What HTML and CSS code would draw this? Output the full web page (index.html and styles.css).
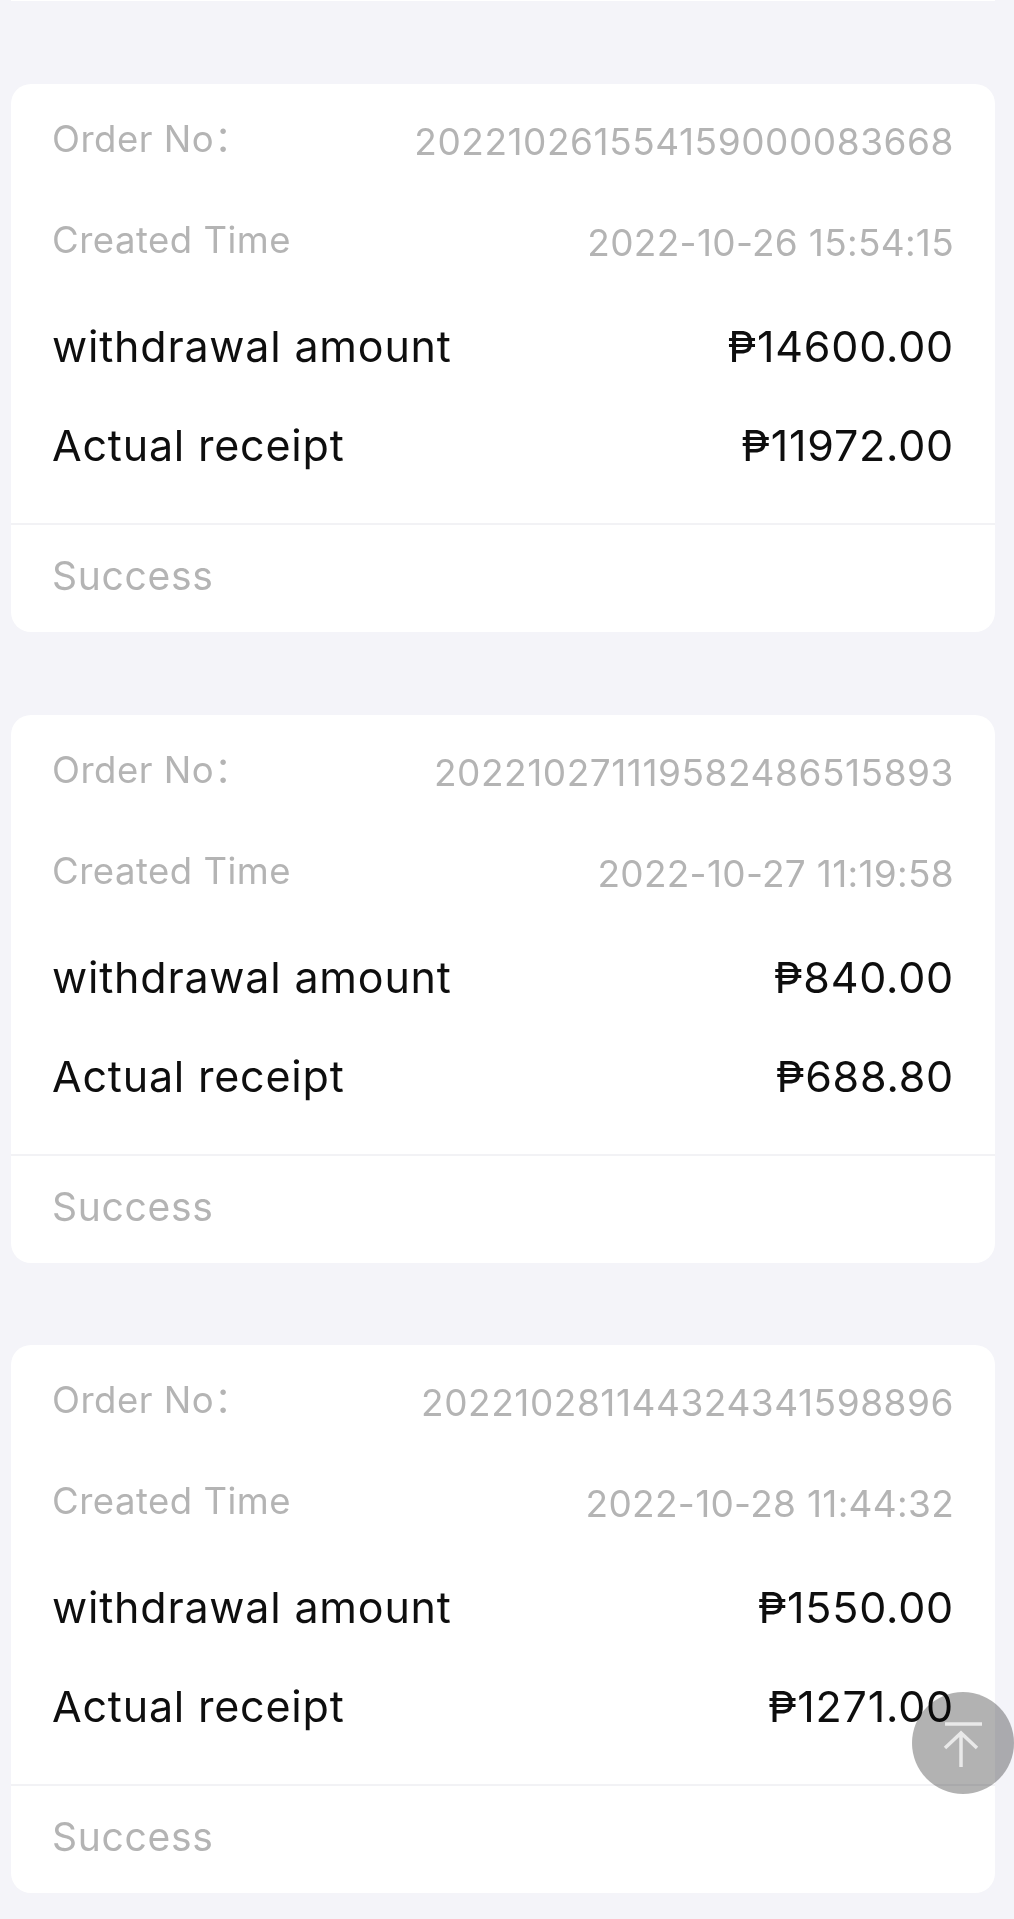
FILE: index.html
```html
<!DOCTYPE html>
<html lang="en">
<head>
<meta charset="utf-8">
<title>Withdrawal records</title>
<link rel="stylesheet" href="styles.css">
</head>
<body>
<main class="list">
  <div class="card-end"></div>
  <article class="card">
    <div class="info">
      <div class="row row-muted"><span class="label">Order No：</span><span class="value">202210261554159000083668</span></div>
      <div class="row row-muted"><span class="label">Created Time</span><span class="value date">2022-10-26 15:54:15</span></div>
      <div class="row row-strong"><span class="label">withdrawal amount</span><span class="value">₱14600.00</span></div>
      <div class="row row-strong"><span class="label">Actual receipt</span><span class="value">₱11972.00</span></div>
    </div>
    <div class="status">Success</div>
  </article>
  <article class="card">
    <div class="info">
      <div class="row row-muted"><span class="label">Order No：</span><span class="value">202210271119582486515893</span></div>
      <div class="row row-muted"><span class="label">Created Time</span><span class="value date">2022-10-27 11:19:58</span></div>
      <div class="row row-strong"><span class="label">withdrawal amount</span><span class="value">₱840.00</span></div>
      <div class="row row-strong"><span class="label">Actual receipt</span><span class="value">₱688.80</span></div>
    </div>
    <div class="status">Success</div>
  </article>
  <article class="card">
    <div class="info">
      <div class="row row-muted"><span class="label">Order No：</span><span class="value">202210281144324341598896</span></div>
      <div class="row row-muted"><span class="label">Created Time</span><span class="value date">2022-10-28 11:44:32</span></div>
      <div class="row row-strong"><span class="label">withdrawal amount</span><span class="value">₱1550.00</span></div>
      <div class="row row-strong"><span class="label">Actual receipt</span><span class="value">₱1271.00</span></div>
    </div>
    <div class="status">Success</div>
  </article>
</main>
<button class="to-top" type="button" aria-label="Back to top">
  <svg viewBox="0 0 102 102" width="102" height="102" fill="none" stroke="#e9e9e9" stroke-width="3.5">
    <path d="M33 32H70"/>
    <path d="M49 75V41M33 56L49 41L65 56"/>
  </svg>
</button>
</body>
</html>
```
FILE: styles.css
```css
* { box-sizing: border-box; }
html, body { margin: 0; padding: 0; }
body {
  position: relative;
  height: 1919px;
  overflow: hidden;
  background: #f4f4f9;
  font-family: Inter, "Noto Sans CJK SC", "Liberation Sans", sans-serif;
}
.list {
  display: flex;
  flex-direction: column;
  gap: 82.5px;
  padding: 0 19px 0 11px;
  filter: blur(0.4px);
}
.card-end {
  height: 1px;
  margin-bottom: 0.5px;
  background: #fff;
}
.card {
  height: 548px;
  display: flex;
  flex-direction: column;
  background: #fff;
  border-radius: 20px;
}
.info {
  height: 441px;
  padding: 28px 41px 0;
  border-bottom: 2px solid #f2f2f5;
}
.row {
  display: flex;
  justify-content: space-between;
  align-items: center;
  line-height: 54px;
}
.row-muted {
  height: 54px;
  margin-bottom: 47px;
  color: #b4b4b4;
}
.row-muted .label {
  font-size: 36.5px;
  letter-spacing: 0.5px;
}
.row-muted .value {
  position: relative;
  top: 3px;
  font-size: 37px;
  letter-spacing: 0.55px;
}
.row-muted .date { letter-spacing: 0.3px; }
.row-muted + .row-muted { margin-bottom: 52px; }
.row-strong {
  height: 54px;
  margin-bottom: 45px;
  font-size: 43px;
  letter-spacing: 0.8px;
  color: #0e0e0e;
}
.row-strong + .row-strong { margin-bottom: 0; }
.status {
  flex: 1;
  display: flex;
  align-items: center;
  padding: 0 41px 6px;
  font-size: 39px;
  letter-spacing: 0.7px;
  color: #b4b4b4;
}
.to-top {
  position: absolute;
  left: 912px;
  top: 1692px;
  width: 102px;
  height: 102px;
  padding: 0;
  border: 0;
  border-radius: 50%;
  background: rgba(0, 0, 0, 0.3);
}
.to-top svg { display: block; }
```
